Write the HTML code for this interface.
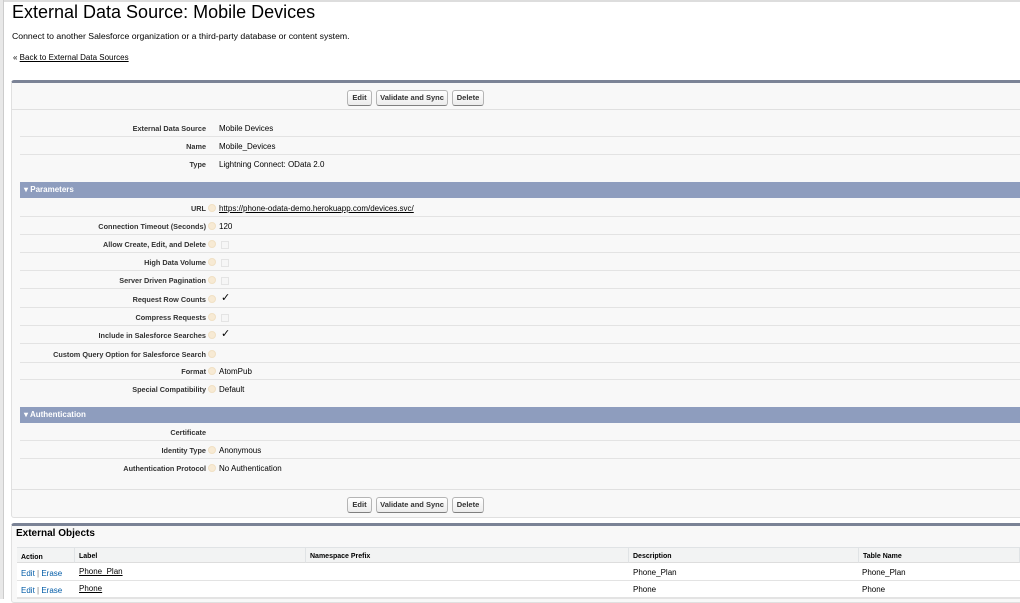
<!DOCTYPE html>
<html><head><meta charset="utf-8"><style>
*{margin:0;padding:0;box-sizing:border-box}
body{width:1020px;height:599px;overflow:hidden;background:#fff;font-family:"Liberation Sans",Arial,sans-serif;color:#000;position:relative}
.abs{position:absolute}
.leftstrip{left:0;top:0;width:4px;height:599px;background:#e8e8e8;border-right:1px solid #ccc}
.topline{left:0;top:0;width:1020px;height:2px;background:#ddd}
h1{position:absolute;left:12px;top:2px;font-size:18px;font-weight:normal;white-space:nowrap}
.sub{left:12px;top:31px;font-size:8.7px}
.back{left:13px;top:53px;font-size:8px}
.back a{color:#000;text-decoration:underline}
.panel{left:11px;width:1012px;background:#f8f8f8;border:1px solid #e0e0e0;border-top:3px solid #7b8396;border-radius:3px}
.btnrow{left:12px;width:1008px;height:27px;border-bottom:1px solid #e0e0e0}
.btn{position:absolute;height:16px;border:1px solid #b5b5b5;border-bottom-color:#7f7f7f;border-radius:3px;background:linear-gradient(#fff,#ececec);font-size:7.5px;font-weight:bold;color:#333;line-height:14px;text-align:center}
.row{position:absolute;left:20px;width:1000px;height:18px;border-bottom:1px solid #e3e3e3;font-size:8px}
.row .l{position:absolute;right:814px;top:5px;font-weight:bold;color:#333;white-space:nowrap;font-size:7.3px}
.row .v{position:absolute;left:199px;top:5px;white-space:nowrap}
.row .i{position:absolute;left:188px;top:5px;width:8px;height:8px;border-radius:50%;background:#f7ead4;border:1px solid #f0e0c4}
.row .cb{position:absolute;left:201px;top:5px;width:8px;height:8px;border:1px solid #e4e4e4;background:#f6f6f6}
.row .ck{position:absolute;left:201px;top:1px;font-size:11px}
.nob{border-bottom:none}
.sec{position:absolute;left:20px;width:1000px;height:16px;background:#8e9dbe;color:#fff;font-size:8px;font-weight:bold;line-height:16px;padding-left:4px}
.lnk{color:#015ba7}
.th{position:absolute;top:548px;height:15px;background:#f2f3f3;border-right:1px solid #e0e3e5;border-bottom:1px solid #ddd;font-size:7px;font-weight:bold;color:#000;padding:5px 0 0 4px}
.td{position:absolute;font-size:8px;white-space:nowrap}
</style></head><body>
<div class="abs topline"></div>
<div class="abs leftstrip"></div>
<h1>External Data Source: Mobile Devices</h1>
<div class="abs sub">Connect to another Salesforce organization or a third-party database or content system.</div>
<div class="abs back">« <a>Back to External Data Sources</a></div>

<div class="abs panel" style="top:80px;height:438px"></div>
<div class="abs btnrow" style="top:83px"></div>
<div class="btn" style="left:347px;top:90px;width:25px">Edit</div>
<div class="btn" style="left:376px;top:90px;width:72px">Validate and Sync</div>
<div class="btn" style="left:452px;top:90px;width:32px">Delete</div>

<div class="row" style="top:119px"><span class="l">External Data Source</span><span class="v">Mobile Devices</span></div>
<div class="row" style="top:137px"><span class="l">Name</span><span class="v">Mobile_Devices</span></div>
<div class="row nob" style="top:155px"><span class="l">Type</span><span class="v">Lightning Connect: OData 2.0</span></div>

<div class="sec" style="top:182px">▾ Parameters</div>
<div class="row" style="top:199px"><span class="l">URL</span><span class="i"></span><span class="v" style="text-decoration:underline">https://phone-odata-demo.herokuapp.com/devices.svc/</span></div>
<div class="row" style="top:217px"><span class="l">Connection Timeout (Seconds)</span><span class="i"></span><span class="v">120</span></div>
<div class="row" style="top:235px"><span class="l">Allow Create, Edit, and Delete</span><span class="i"></span><span class="cb" style="top:6px"></span></div>
<div class="row" style="top:253px"><span class="l">High Data Volume</span><span class="i"></span><span class="cb" style="top:6px"></span></div>
<div class="row" style="top:271px"><span class="l">Server Driven Pagination</span><span class="i"></span><span class="cb" style="top:6px"></span></div>
<div class="row" style="top:290px"><span class="l">Request Row Counts</span><span class="i"></span><span class="ck">✓</span></div>
<div class="row" style="top:308px"><span class="l">Compress Requests</span><span class="i"></span><span class="cb" style="top:6px"></span></div>
<div class="row" style="top:326px"><span class="l">Include in Salesforce Searches</span><span class="i"></span><span class="ck">✓</span></div>
<div class="row" style="top:345px"><span class="l">Custom Query Option for Salesforce Search</span><span class="i"></span></div>
<div class="row" style="top:362px"><span class="l">Format</span><span class="i"></span><span class="v">AtomPub</span></div>
<div class="row nob" style="top:380px"><span class="l">Special Compatibility</span><span class="i"></span><span class="v">Default</span></div>

<div class="sec" style="top:407px">▾ Authentication</div>
<div class="row" style="top:423px"><span class="l">Certificate</span></div>
<div class="row" style="top:441px"><span class="l">Identity Type</span><span class="i"></span><span class="v">Anonymous</span></div>
<div class="row nob" style="top:459px"><span class="l">Authentication Protocol</span><span class="i"></span><span class="v">No Authentication</span></div>

<div class="abs" style="left:12px;top:489px;width:1008px;height:1px;background:#e0e0e0"></div>
<div class="btn" style="left:347px;top:497px;width:25px">Edit</div>
<div class="btn" style="left:376px;top:497px;width:72px">Validate and Sync</div>
<div class="btn" style="left:452px;top:497px;width:32px">Delete</div>

<div class="abs panel" style="top:523px;height:80px"></div>
<div class="abs" style="left:16px;top:528px;font-size:10px;font-weight:bold">External Objects</div>
<div class="abs" style="left:17px;top:547px;width:1003px;height:52px;background:#fff;border-top:1px solid #e0e3e5"></div>
<div class="th" style="left:17px;width:58px;padding-top:6px">Action</div>
<div class="th" style="left:75px;width:231px">Label</div>
<div class="th" style="left:306px;width:323px">Namespace Prefix</div>
<div class="th" style="left:629px;width:230px">Description</div>
<div class="th" style="left:859px;width:161px">Table Name</div>
<div class="abs" style="left:17px;top:580px;width:1003px;height:1px;background:#e3e3e3"></div>
<div class="abs" style="left:17px;top:597px;width:1003px;height:2px;background:#e3e3e3"></div>
<div class="td" style="left:21px;top:569px"><span class="lnk">Edit</span> <span style="color:#777">|</span> <span class="lnk">Erase</span></div>
<div class="td" style="left:79px;top:567px;text-decoration:underline">Phone_Plan</div>
<div class="td" style="left:633px;top:568px">Phone_Plan</div>
<div class="td" style="left:862px;top:568px">Phone_Plan</div>
<div class="td" style="left:21px;top:586px"><span class="lnk">Edit</span> <span style="color:#777">|</span> <span class="lnk">Erase</span></div>
<div class="td" style="left:79px;top:584px;text-decoration:underline">Phone</div>
<div class="td" style="left:633px;top:585px">Phone</div>
<div class="td" style="left:862px;top:585px">Phone</div>
</body></html>
